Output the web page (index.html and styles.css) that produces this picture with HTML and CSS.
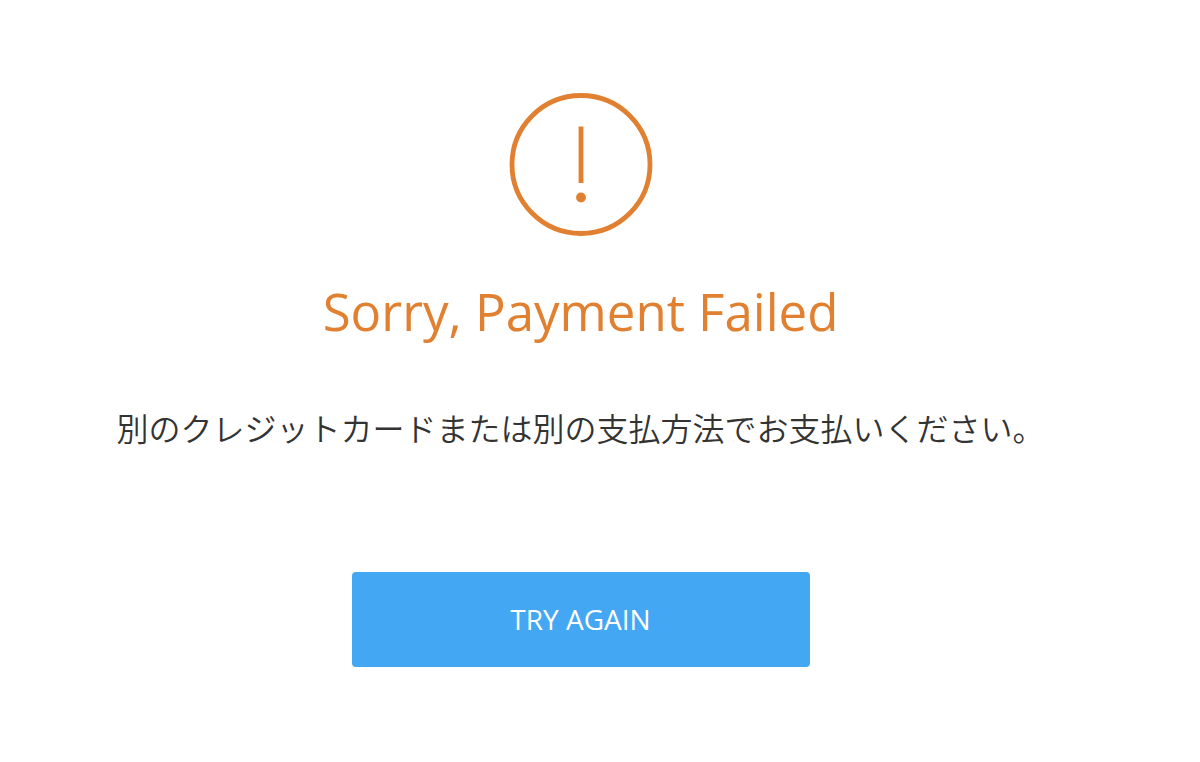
FILE: index.html
```html
<!DOCTYPE html>
<html lang="ja">
<head>
    <meta charset="UTF-8">
    <meta name="viewport" content="width=device-width, initial-scale=1">
    <title>Payment Failed</title>
    <link rel="stylesheet" href="styles.css">
</head>
<body>
    <main class="result">
        <svg class="result-icon" viewBox="0 0 144 144" aria-hidden="true">
            <circle cx="72" cy="72.500" r="69" fill="none" stroke="currentColor" stroke-width="4.800"/>
            <path d="M72 34.500V91" fill="none" stroke="currentColor" stroke-width="4.800"/>
            <circle cx="72" cy="105.500" r="4.900" fill="currentColor"/>
        </svg>
        <h1 class="result-title" lang="en">Sorry, Payment Failed</h1>
        <p class="result-text">別のクレジットカードまたは別の支払方法でお支払いください。</p>
        <button class="btn" type="button" lang="en">TRY AGAIN</button>
    </main>
</body>
</html>
```

FILE: styles.css
```css
*{
    margin: 0;
    padding: 0;
    box-sizing: border-box;
}
body{
    background: #fff;
    color: #333;
    font-family: "Open Sans", "Noto Sans CJK JP", sans-serif;
}
.result{
    display: flex;
    flex-direction: column;
    align-items: center;
    padding: 92px 39px 40px 0;
}
.result-icon{
    width: 144px;
    height: 144px;
    color: #e08030;
}
.result-title{
    margin-top: 39px;
    color: #e08030;
    font-size: 51px;
    font-weight: 400;
    line-height: 72px;
    text-align: center;
}
.result-text{
    margin-top: 58px;
    font-family: "Noto Sans CJK JP", sans-serif;
    font-size: 32px;
    font-weight: 350;
    line-height: 44px;
}
.btn{
    width: 458px;
    max-width: 100%;
    padding: 27px 20px 28px;
    margin-top: 123px;
    border: 0;
    border-radius: 4px;
    background: #44a7f3;
    color: #fff;
    font-family: "Open Sans", sans-serif;
    font-size: 28px;
    line-height: 40px;
    cursor: pointer;
}
```
